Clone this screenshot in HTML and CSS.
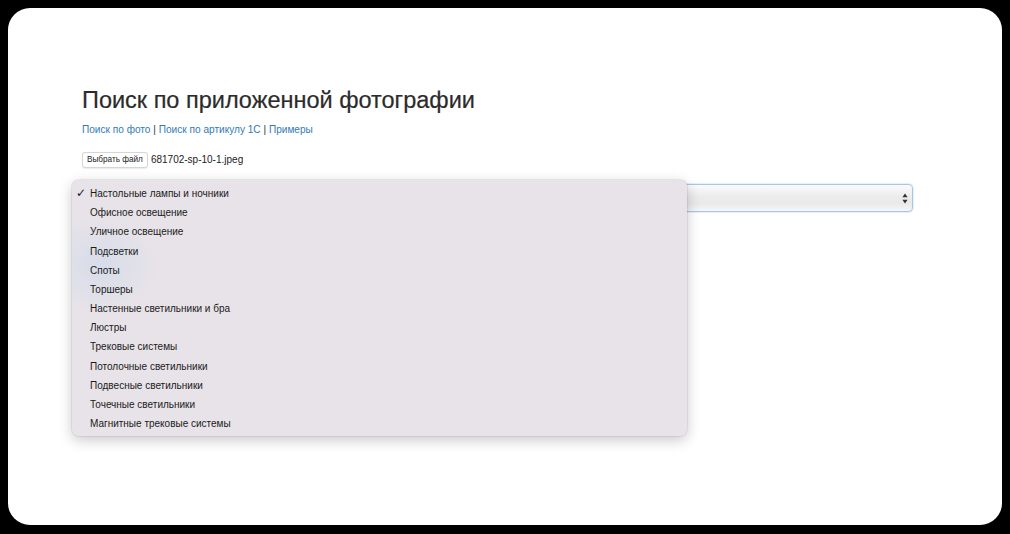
FILE: index.html
```html
<!DOCTYPE html>
<html lang="ru">
<head>
<meta charset="utf-8">
<title>Поиск по приложенной фотографии</title>
<link rel="stylesheet" href="styles.css">
</head>
<body>
<div class="frame">
  <div class="container">
    <h1 class="title">Поиск по приложенной фотографии</h1>
    <p class="links"><a href="#">Поиск по фото</a> | <a href="#">Поиск по артикулу 1С</a> | <a href="#">Примеры</a></p>
    <div class="file-row">
      <span class="file-btn">Выбрать файл</span>
      <span class="file-name">681702-sp-10-1.jpeg</span>
    </div>
    <div class="select-wrap">
      <div class="select">
        <svg class="arrows" width="6" height="11" viewBox="0 0 6 11"><path d="M3 0.5 L5.6 4.2 L0.4 4.2 Z M3 10.5 L5.6 6.8 L0.4 6.8 Z" fill="#333"/></svg>
      </div>
      <ul class="popup">
        <li class="checked"><span class="check">✓</span>Настольные лампы и ночники</li>
        <li>Офисное освещение</li>
        <li>Уличное освещение</li>
        <li>Подсветки</li>
        <li>Споты</li>
        <li>Торшеры</li>
        <li>Настенные светильники и бра</li>
        <li>Люстры</li>
        <li>Трековые системы</li>
        <li>Потолочные светильники</li>
        <li>Подвесные светильники</li>
        <li>Точечные светильники</li>
        <li>Магнитные трековые системы</li>
      </ul>
    </div>
  </div>
</div>
</body>
</html>
```
FILE: styles.css
```css
html, body {
  margin: 0;
  padding: 0;
  background: #000;
}
body {
  font-family: "Liberation Sans", Arial, sans-serif;
  color: #333;
}
.frame {
  margin: 8px 8px 9px 8px;
  height: 517px;
  background: #fff;
  border-radius: 22px;
  overflow: hidden;
}
.container {
  padding: 79px 89px 0 74px;
}
.title {
  margin: 0;
  font-size: 23.5px;
  line-height: 26px;
  font-weight: normal;
  color: #2b2b2b;
  -webkit-text-stroke: 0.2px #2b2b2b;
}
.links {
  margin: 10px 0 0 0;
  font-size: 10.1px;
  line-height: 14px;
  color: #333;
}
.links a {
  color: #337ab7;
  text-decoration: none;
}
.file-row {
  margin-top: 15px;
  height: 16px;
  display: flex;
  align-items: center;
}
.file-btn {
  font-size: 8.2px;
  line-height: 12px;
  padding: 1px 4px;
  border: 1px solid #d6d6d6;
  border-radius: 3px;
  background: #fff;
  color: #222;
  box-shadow: 0 0.5px 1px rgba(0,0,0,0.08);
}
.file-name {
  margin-left: 3px;
  font-size: 10px;
  line-height: 16px;
  color: #222;
}
.select-wrap {
  position: relative;
  margin-top: 16px;
}
.select {
  height: 26px;
  border: 1px solid #a3c8ee;
  border-radius: 4px;
  background: linear-gradient(#fbfbfb 0%, #ececec 45%, #e9e9e9 70%, #f6f6f6 100%);
  display: flex;
  align-items: center;
  justify-content: flex-end;
  padding-right: 4px;
  box-shadow: 0 0 0 0.5px #cfe2f6;
}
.arrows {
  display: block;
}
.popup {
  position: absolute;
  left: -10px;
  top: -4px;
  width: 615px;
  margin: 0;
  padding: 4px 0 3px 0;
  box-sizing: border-box;
  height: 256px;
  list-style: none;
  background: radial-gradient(ellipse 60px 50px at 28px 85px, rgba(200,215,235,0.55), rgba(232,227,232,0) 100%), #e8e3e8;
  border-radius: 6px;
  box-shadow: 0 0 0 0.5px rgba(0,0,0,0.12), 0 4px 14px rgba(0,0,0,0.22);
  font-size: 10px;
  line-height: 19.17px;
  color: #1a1a1a;
}
.popup li {
  position: relative;
  padding-left: 18px;
  white-space: nowrap;
}
.check {
  position: absolute;
  left: 4px;
  top: 0;
  font-size: 12px;
  font-family: "DejaVu Sans", sans-serif;
  line-height: 19px;
}
```
